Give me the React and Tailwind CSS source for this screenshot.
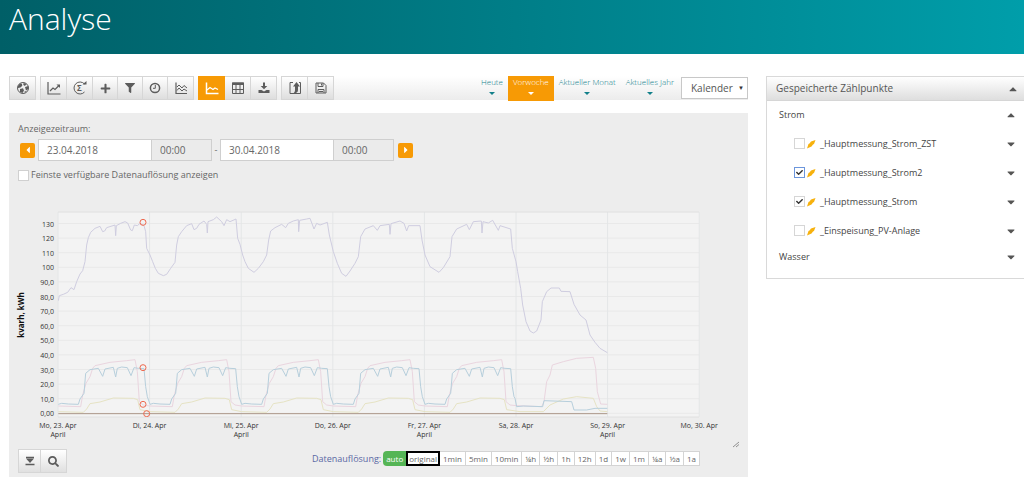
import { FaPlus, FaFilter, FaCaretLeft, FaCaretRight, FaCaretDown, FaCaretUp, FaCheck, FaSearch } from 'react-icons/fa'

const stroke = { fill: 'none', stroke: 'currentColor', strokeWidth: 1.2 }

function Icon({ children }) {
  return (
    <svg viewBox="0 0 14 14" className="h-3.5 w-3.5" aria-hidden="true">
      {children}
    </svg>
  )
}

const icons = {
  globe: (
    <Icon>
      <circle cx="7" cy="7" r="5.5" {...stroke} strokeWidth="1" />
      <path fill="currentColor" d="M2 5l2-2.5 2 .3.3 2L4.500 6.500 2 7zM7.500 2l3 .8L9 5 7.300 4zM9 6l3.300-1v3L10 9.500zM4 8l3-.8 1 2.300L6.500 12 4 11zM8.500 10.500l2-.5-1.500 2z" />
    </Icon>
  ),
  lineUp: (
    <Icon>
      <path d="M1 1v12h12.500" {...stroke} />
      <path d="M3 10l3-3 2 1.500L12 4.500" {...stroke} />
      <path d="M9.500 3.500H13V7z" fill="currentColor" />
    </Icon>
  ),
  sum: (
    <Icon>
      <path d="M11.500 3A6 6 0 1 0 11.500 11" {...stroke} strokeWidth="1" />
      <path d="M9.500 3.500h4V0z" fill="currentColor" />
      <text x="4" y="10" fontSize="8" fontWeight="bold" fontFamily="Open Sans, sans-serif" fill="currentColor">Σ</text>
    </Icon>
  ),
  plus: <FaPlus className="h-[11px] w-[11px]" />,
  filter: <FaFilter className="h-2.5 w-2.5" />,
  clock: (
    <Icon>
      <circle cx="7" cy="7" r="4.600" {...stroke} strokeWidth="1.500" />
      <path d="M7.300 4v3.300H5" {...stroke} strokeWidth="1" />
    </Icon>
  ),
  lines: (
    <Icon>
      <path d="M2 1.500v11H13" {...stroke} />
      <path d="M3 6l2-2 3 3 2-2.500 3 2.500M3 9.500l2-2.500 3 3 2-2 3 2" {...stroke} strokeWidth="1" />
    </Icon>
  ),
  chart: (
    <Icon>
      <path d="M1.500 1.500v11H13.500" {...stroke} strokeWidth="1.500" />
      <path d="M2 9l3-2.500 3 2 2-1.500L13 8.500" {...stroke} />
    </Icon>
  ),
  table: (
    <Icon>
      <path d="M1.500 2h11v10.500h-11zM5 4v8.500M9 4v8.500M1.500 8.500h11" {...stroke} strokeWidth="1" />
      <path d="M1 1.500h12V4H1z" fill="currentColor" />
    </Icon>
  ),
  download: (
    <Icon>
      <path d="M6 1.500h2V5h2.300L7 8.200 3.700 5H6zM1.500 9h3L7 10.500 9.500 9h3v3h-11z" fill="currentColor" />
    </Icon>
  ),
  share: (
    <Icon>
      <path d="M5 1.500H2v11h10.500v-11H11" {...stroke} strokeWidth="1" />
      <path d="M8.500 1L12 5.500h-2V9c0 2-1.500 3.500-5 3.500C6.500 11.500 7 10.500 7 9V5.500H5z" fill="currentColor" />
    </Icon>
  ),
  save: (
    <Icon>
      <path d="M2 2h7.500L12 4.500v7.500H2zM4 2v3.500h5V2M4 12V8.500h6V12M7.500 2.500v2M5 10.500h4" {...stroke} strokeWidth="1" />
    </Icon>
  ),
}

const toolGroups = [
  [['globe', 'Übersicht']],
  [
    ['lineUp', 'Verlauf'],
    ['sum', 'Summe'],
    ['plus', 'Hinzufügen'],
    ['filter', 'Filter'],
    ['clock', 'Zeit'],
    ['lines', 'Vergleich'],
  ],
  [
    ['chart', 'Diagramm'],
    ['table', 'Tabelle'],
    ['download', 'Download'],
  ],
  [
    ['share', 'Exportieren'],
    ['save', 'Speichern'],
  ],
]

const narrow = ['plus', 'filter', 'clock']
const ranges = ['Heute', 'Vorwoche', 'Aktueller Monat', 'Aktuelles Jahr']

function toolClass(name) {
  if (name === 'chart') return '-my-px -ml-px w-[27px] bg-[#f79a05] text-white'
  const base = 'border-r border-[#d6d6d6] bg-linear-to-b from-white to-[#dedede] text-[#5c5c5c]'
  return narrow.includes(name) ? `w-[25px] ${base}` : `w-[26px] ${base}`
}

function Toolbar() {
  return (
    <div className="flex h-6 justify-between bg-linear-to-b from-white to-[#ececec]">
      <div className="flex gap-1">
        {toolGroups.map((group, i) => (
          <div key={i} className="flex border-y border-l border-[#d6d6d6]">
            {group.map(([name, label]) => (
              <button key={name} aria-label={label} className={`flex items-center justify-center ${toolClass(name)}`}>
                {icons[name]}
              </button>
            ))}
          </div>
        ))}
      </div>
      <div className="flex">
        {ranges.map((range) => (
          <button
            key={range}
            className={`flex h-[25px] flex-col items-center gap-1 px-[5px] text-[8px] leading-3 font-light ${
              range === 'Vorwoche' ? 'bg-[#f79a05] text-white' : 'text-[#12808a]'
            }`}
          >
            {range}
            <svg viewBox="0 0 6 4" className="h-1 w-1.5" aria-hidden="true">
              <path d="M0 0h6L3 3z" fill="currentColor" />
            </svg>
          </button>
        ))}
        <div className="relative ml-0.5 pt-px">
          <select aria-label="Kalender" className="block h-[22px] w-[67px] appearance-none border border-[#c8c8c8] bg-white pl-[9px] text-[10px] text-[#555]">
            <option>Kalender</option>
          </select>
          <span className="pointer-events-none absolute top-1.5 right-1 text-[6px] leading-3 text-[#333]">▼</span>
        </div>
      </div>
    </div>
  )
}

function DateFields({ date, label }) {
  return (
    <div className="flex h-[22px]">
      <input aria-label={`${label} Datum`} defaultValue={date} className="w-[114px] border border-[#cfcfcf] bg-white px-2 text-[10px]" />
      <input aria-label={`${label} Uhrzeit`} defaultValue="00:00" className="-ml-px w-[61px] border border-[#cfcfcf] bg-[#ebebeb] px-2 text-[10px]" />
    </div>
  )
}

// One working day is 275 units wide, the zero line lies at y = 625.
const DAY = 275
const days = [0, 1, 2, 3, 4]

function repeatDay(profile, tail) {
  const week = days.flatMap((day) => profile.map(([x, y]) => [x + day * DAY, y]))
  return [...week, ...tail].map((point) => point.join(',')).join(' ')
}

const energy =
  '175,287 178,272 190,268 203,262 213,248 222,254 230,230 240,207 248,197 255,170 260,120 265,98 272,82 285,70 300,64 308,80 314,78 320,68 345,60 347,92 349,62 362,55 375,50 383,54 392,75 397,77 403,60 412,62 420,55 432,62 437,80 440,130 450,150 458,170 466,190 475,205 490,212 500,208 512,190 525,172 530,120 535,95 545,80 560,62 575,56 582,74 590,70 597,58 612,48 620,58 622,84 624,50 640,44 650,36 665,50 672,62 680,44 690,50 708,42 713,100 720,118 728,150 735,170 745,190 762,202 775,190 790,170 800,150 806,105 812,78 825,68 845,58 857,68 865,55 880,48 895,44 896,80 899,46 920,42 930,40 942,72 950,55 960,60 982,52 988,90 1000,140 1012,175 1025,205 1038,214 1050,198 1065,175 1075,155 1082,95 1095,72 1120,62 1132,76 1140,62 1168,58 1170,88 1173,56 1200,48 1212,55 1220,78 1226,62 1260,62 1266,105 1275,150 1290,185 1317,202 1330,188 1350,155 1356,95 1370,72 1400,58 1408,74 1420,50 1444,48 1446,84 1449,50 1465,54 1478,46 1495,76 1500,62 1532,72 1537,130 1548,170 1553,200 1562,250 1568,300 1578,350 1590,378 1600,384 1610,378 1623,345 1627,290 1640,260 1653,249 1678,249 1683,259 1710,260 1722,298 1740,330 1758,345 1770,390 1785,412 1800,430 1822,443'

const blue = repeatDay(
  [[175, 598], [185, 595], [205, 597], [235, 598], [240, 582], [252, 565], [257, 505], [270, 494], [295, 490], [308, 514], [315, 492], [340, 487], [347, 516], [352, 490], [365, 486], [382, 488], [393, 512], [402, 488], [415, 490], [432, 491], [437, 545], [442, 575]],
  [[1545, 580], [1550, 605], [1570, 603], [1628, 605], [1632, 587], [1715, 590], [1722, 615], [1760, 615], [1785, 610], [1822, 610]]
)

const pink = repeatDay(
  [[175, 603], [242, 605], [248, 570], [258, 535], [270, 515], [278, 490], [285, 482], [330, 472], [380, 467], [405, 464], [412, 500], [418, 590], [430, 600]],
  [[1550, 602], [1625, 605], [1632, 590], [1640, 530], [1650, 510], [1657, 480], [1690, 470], [1730, 460], [1780, 457], [1787, 490], [1792, 560], [1802, 597], [1822, 598]]
)

const yellow = repeatDay(
  [[175, 620], [250, 622], [260, 612], [270, 596], [300, 591], [340, 579], [400, 580], [413, 584], [420, 614]],
  [[1560, 620], [1630, 620], [1650, 600], [1690, 582], [1730, 575], [1780, 580], [1790, 605], [1800, 618], [1822, 620]]
)

const markers = [[429, 52], [429, 488], [429, 598], [440, 626]]
const yLabels = ['0,00', '10,0', '20,0', '30,0', '40,0', '50,0', '60,0', '70,0', '80,0', '90,0', '100', '110', '120', '130']
const xLabels = ['Mo, 23. Apr', 'Di, 24. Apr', 'Mi, 25. Apr', 'Do, 26. Apr', 'Fr, 27. Apr', 'Sa, 28. Apr', 'So, 29. Apr', 'Mo, 30. Apr']

function Chart() {
  return (
    <svg viewBox="0 0 739 250" className="block w-full" fontFamily="Open Sans, sans-serif" fontSize="7" fill="#333">
      <rect x="49" y="22" width="641" height="205" fill="#f3f3f3" />
      {yLabels.map((label, i) => {
        const y = 223.300 - i * 14.600
        return (
          <g key={label}>
            <path d={`M49 ${y}H690`} stroke="#e9e9e9" />
            <text x="45" y={y + 3} textAnchor="end">{label}</text>
          </g>
        )
      })}
      {xLabels.map((label, i) => {
        const x = 49 + i * 91.600
        return (
          <g key={label} textAnchor="middle">
            <path d={`M${x} 22V227`} stroke="#e4e6e7" />
            <text x={x} y="238">{label}</text>
            {[0, 2, 4, 6].includes(i) && <text x={x} y="247">April</text>}
          </g>
        )
      })}
      <path d="M49 22H690M49 227H690" stroke="#e0e0e0" />
      <text transform="translate(15 125) rotate(-90)" textAnchor="middle" fontSize="8" fontWeight="bold" fill="#111">kvarh, kWh</text>
      <svg x="49" y="22" width="641" height="205" viewBox="174 21 1923 615" fill="none" strokeWidth="3" strokeLinejoin="round">
        <polyline points={yellow} stroke="#e6e3c4" />
        <polyline points={pink} stroke="#ead5df" />
        <polyline points={blue} stroke="#b7cfdc" />
        <polyline points={energy} stroke="#cfcde0" />
        <path d="M175 626H1822" stroke="#ab9688" />
        {markers.map(([x, y]) => (
          <circle key={y} cx={x} cy={y} r="9" stroke="#ee6a50" />
        ))}
      </svg>
    </svg>
  )
}

const resolutions = ['auto', 'original', '1min', '5min', '10min', '¼h', '½h', '1h', '12h', '1d', '1w', '1m', '¼a', '½a', '1a']

function resolutionClass(name) {
  if (name === 'auto') return 'rounded-l-sm bg-[#55b555] px-[3px] text-white'
  if (name === 'original') return 'border-2 border-black bg-white px-px'
  return 'border-y border-r border-[#d4d4d4] bg-white px-[3px]'
}

function AnalysisPanel() {
  return (
    <section className="mt-[13px] bg-[#ededed] pt-2 pb-1.5">
      <div className="px-[9px] text-[9px] text-[#666]">
        <p className="leading-[15px]">Anzeigezeitraum:</p>
        <div className="mt-[3px] flex items-center">
          <button aria-label="Zurück" className="mr-[3px] ml-0.5 flex h-[15px] w-[15px] items-center justify-center rounded-xs bg-[#f79a05] text-white">
            <FaCaretLeft className="h-2.5 w-2.5" />
          </button>
          <DateFields date="23.04.2018" label="Von" />
          <span className="w-2 text-center">-</span>
          <DateFields date="30.04.2018" label="Bis" />
          <button aria-label="Weiter" className="ml-1 flex h-[15px] w-[15px] items-center justify-center rounded-xs bg-[#f79a05] text-white">
            <FaCaretRight className="h-2.5 w-2.5" />
          </button>
        </div>
        <label className="mt-1.5 flex h-4 items-center gap-0.5">
          <input type="checkbox" className="h-[11px] w-[11px] appearance-none border border-[#d0d0d0] bg-white" />
          Feinste verfügbare Datenauflösung anzeigen
        </label>
      </div>
      <div className="mt-[7px]">
        <Chart />
      </div>
      <div className="flex h-[9px] justify-end pr-2">
        <svg viewBox="0 0 8 8" className="h-2 w-2" aria-hidden="true">
          <path d="M1 7l6-5M4 7l3-2.500" stroke="#777" strokeWidth="0.800" />
        </svg>
      </div>
      <div className="flex items-start justify-between pr-12 pl-[9px]">
        <div className="flex h-6 border border-[#d6d6d6] text-[#5c5c5c]">
          <button aria-label="Ausklappen" className="flex w-[22px] items-center justify-center border-r border-[#d6d6d6] bg-linear-to-b from-white to-[#e0e0e0]">
            <Icon>
              <path d="M3 3.500h8M2.500 10.500h9" {...stroke} strokeWidth="1.500" />
              <path d="M3 4.500h8L7 9z" fill="currentColor" />
            </Icon>
          </button>
          <button aria-label="Suchen" className="flex w-[25px] items-center justify-center bg-linear-to-b from-white to-[#e0e0e0]">
            <FaSearch className="h-[11px] w-[11px]" />
          </button>
        </div>
        <div className="flex h-[15px] items-center pt-1 text-[8px] text-[#666]">
          <span className="mr-0.5 text-[9px] text-[#5a68a4]">Datenauflösung:</span>
          {resolutions.map((name) => (
            <button key={name} className={`h-[15px] shrink-0 leading-3 ${resolutionClass(name)}`}>{name}</button>
          ))}
        </div>
      </div>
    </section>
  )
}

const meters = [
  { name: '_Hauptmessung_Strom_ZST', checked: false },
  { name: '_Hauptmessung_Strom2', checked: true, focused: true },
  { name: '_Hauptmessung_Strom', checked: true },
  { name: '_Einspeisung_PV-Anlage', checked: false },
]

function MeterRow({ name, checked, focused }) {
  return (
    <li className="flex h-[29px] items-center justify-between pl-[15px]">
      <label className="flex items-center">
        <span className="grid place-items-center">
          <input
            type="checkbox"
            defaultChecked={checked}
            className={`col-start-1 row-start-1 h-[11px] w-[11px] appearance-none border bg-white ${focused ? 'border-[#6c96dc]' : 'border-[#d6d6d6]'}`}
          />
          {checked && <FaCheck className="pointer-events-none col-start-1 row-start-1 h-[7px] w-[7px] text-[#333]" />}
        </span>
        <svg viewBox="0 0 10 10" className="ml-px h-2.5 w-2.5" aria-hidden="true">
          <path d="M9.500 1L5 2.500 3.500 4.500 2.500 5 1 9.500l4.500-2L7 5.500 8 5z" fill="#f7b10d" />
        </svg>
        <span className="ml-1">{name}</span>
      </label>
      <FaCaretDown className="h-3 w-3 text-[#555]" />
    </li>
  )
}

function MeterList() {
  return (
    <aside className="border-y border-l border-[#d9d9d9] text-[9px] text-[#444]">
      <h2 className="flex h-6 items-center justify-between border-b border-[#d6d6d6] bg-linear-to-b from-white to-[#dedede] pr-[5px] pl-[9px] text-[10px] text-[#555]">
        Gespeicherte Zählpunkte
        <FaCaretUp className="h-3 w-3" />
      </h2>
      <div className="pr-[7px] pb-[9px] pl-3">
        <div className="flex h-7 items-center justify-between">
          Strom
          <FaCaretUp className="h-3 w-3 text-[#555]" />
        </div>
        <ul>
          {meters.map((meter) => (
            <MeterRow key={meter.name} {...meter} />
          ))}
        </ul>
        <div className="flex h-6 items-center justify-between">
          Wasser
          <FaCaretDown className="h-3 w-3 text-[#555]" />
        </div>
      </div>
    </aside>
  )
}

export default function App() {
  return (
    <div className="bg-white font-['Open_Sans',sans-serif]">
      <header className="h-[54px] bg-linear-to-r from-[#005f67] to-[#009eaa] px-[9px]">
        <h1 className="text-[30px] leading-[38px] font-light text-white">Analyse</h1>
      </header>
      <main className="grid grid-cols-[739fr_258fr] items-start gap-[18px] pt-[22px] pl-[9px]">
        <div className="min-w-0">
          <Toolbar />
          <AnalysisPanel />
        </div>
        <MeterList />
      </main>
    </div>
  )
}
